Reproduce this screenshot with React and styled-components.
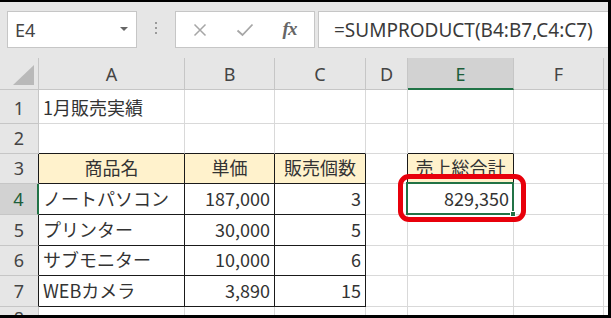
import React from 'react';
import styled, { createGlobalStyle } from 'styled-components';

const Global = createGlobalStyle`
  html, body { margin: 0; padding: 0; background: #fff; }
  body { font-family: "Noto Sans", "Noto Sans CJK JP", sans-serif; }
  * { box-sizing: border-box; }
`;

const GRID = '#d9d9d9';
const HDR_LINE = '#c6c6c6';
const BLACK = '#1a1a1a';
const GREEN = '#217346';

const Frame = styled.div`
  width: 611px;
  height: 318px;
  border-top: 2px solid #000;
  border-right: 3px solid #000;
  border-bottom: 3px solid #000;
  background: #e6e6e6;
  overflow: hidden;
  display: flex;
  flex-direction: column;
`;

const Toolbar = styled.div`
  height: 56px;
  flex-shrink: 0;
  padding: 9px 0 10px 7px;
  display: flex;
  align-items: stretch;
`;

const NameBox = styled.div`
  width: 130px;
  background: #fff;
  border: 1px solid ${HDR_LINE};
  display: flex;
  align-items: center;
  justify-content: space-between;
  padding: 0 8px 0 7px;
  font-family: "Noto Sans", sans-serif;
  font-size: 18px;
  color: #444;
`;

const Caret = styled.span`
  width: 0;
  height: 0;
  border-left: 4px solid transparent;
  border-right: 4px solid transparent;
  border-top: 4px solid #666;
  margin-bottom: 2px;
`;

const Grip = styled.div`
  width: 38px;
  display: flex;
  flex-direction: column;
  align-items: center;
  justify-content: center;
  gap: 3px;
  padding-bottom: 4px;
`;

const GripDot = styled.span`
  width: 2px;
  height: 2px;
  background: #9a9a9a;
`;

const FxButtons = styled.div`
  width: 140px;
  background: #fff;
  border: 1px solid ${HDR_LINE};
  display: flex;
  align-items: center;
  padding-left: 1px;
`;

const FxSlot = styled.div`
  width: 45px;
  height: 100%;
  display: flex;
  align-items: center;
  justify-content: center;
`;

const FxLabel = styled.span`
  font-family: "Liberation Serif", serif;
  font-style: italic;
  font-weight: bold;
  font-size: 19px;
  color: #666;
  letter-spacing: -1px;
  margin-top: -2px;
`;

const FormulaInput = styled.div`
  flex: 1;
  margin-left: 3px;
  background: #fff;
  border: 1px solid ${HDR_LINE};
  border-right: none;
  display: flex;
  align-items: center;
  padding-left: 15px;
  font-family: "Noto Sans", sans-serif;
  font-size: 19px;
  color: #3a3a3a;
  white-space: nowrap;
`;

const Sheet = styled.div`
  flex: 1;
  display: grid;
  grid-template-columns: 39px 146px 90px 91px 42px 106px 90px 1fr;
  grid-template-rows: 32px 34px 30px 30px 31px 31px 30px 31px 1fr;
  background: #fff;
`;

const Corner = styled.div`
  background: #e6e6e6;
  border-right: 1px solid ${HDR_LINE};
  border-bottom: 1px solid ${HDR_LINE};
  display: flex;
  align-items: flex-end;
  justify-content: flex-end;
  padding: 0 4px 4px 0;
`;

const ColHeader = styled.div`
  background: ${(p) => (p.$active ? '#d2d2d2' : '#e6e6e6')};
  border-right: ${(p) => (p.$last ? 'none' : `1px solid ${HDR_LINE}`)};
  border-bottom: ${(p) => (p.$active ? `2px solid ${GREEN}` : `1px solid ${HDR_LINE}`)};
  display: flex;
  align-items: center;
  justify-content: center;
  padding-top: ${(p) => (p.$active ? '1px' : '0')};
  font-family: "Noto Sans", sans-serif;
  font-size: 18px;
  color: ${(p) => (p.$active ? '#1d5e3a' : '#444')};
`;

const RowHeader = styled.div`
  background: ${(p) => (p.$active ? '#d2d2d2' : '#e6e6e6')};
  border-right: ${(p) => (p.$active ? `2px solid ${GREEN}` : `1px solid ${p.$edge}`)};
  border-bottom: 1px solid ${HDR_LINE};
  display: flex;
  align-items: flex-end;
  justify-content: center;
  padding-bottom: 4px;
  line-height: 22px;
  font-family: "Noto Sans", sans-serif;
  font-size: 18px;
  color: ${(p) => (p.$active ? '#1d5e3a' : '#444')};
`;

const Cell = styled.div`
  position: relative;
  background: ${(p) => p.$fill || '#fff'};
  border-right: ${(p) => (p.$r ? `1px solid ${p.$r}` : 'none')};
  border-bottom: ${(p) => (p.$b ? `1px solid ${p.$b}` : 'none')};
  display: flex;
  align-items: flex-end;
  justify-content: ${(p) =>
    p.$align === 'right' ? 'flex-end' : p.$align === 'center' ? 'center' : 'flex-start'};
  padding: 0 4px 5px 4px;
  line-height: 22px;
  font-family: "Noto Sans CJK JP", "Noto Sans", sans-serif;
  font-size: 18px;
  color: #333;
  white-space: nowrap;
`;

const Selection = styled.div`
  position: absolute;
  top: -2px;
  left: -2px;
  right: -1px;
  bottom: -1px;
  border: 2px solid ${GREEN};
  pointer-events: none;
  z-index: 2;
`;

const Handle = styled.span`
  position: absolute;
  right: -4px;
  bottom: -4px;
  width: 6px;
  height: 6px;
  background: ${GREEN};
  border: 1px solid #fff;
`;

const Callout = styled.div`
  position: absolute;
  top: -10px;
  left: -10px;
  right: -13px;
  bottom: -8px;
  border: 5px solid #e8000b;
  border-radius: 11px;
  pointer-events: none;
  z-index: 3;
`;

const COLS = ['A', 'B', 'C', 'D', 'E', 'F', ''];

const ROWS = [
  ['1月販売実績', '', '', '', '', '', ''],
  ['', '', '', '', '', '', ''],
  ['商品名', '単価', '販売個数', '', '売上総合計', '', ''],
  ['ノートパソコン', '187,000', '3', '', '829,350', '', ''],
  ['プリンター', '30,000', '5', '', '', '', ''],
  ['サブモニター', '10,000', '6', '', '', '', ''],
  ['WEBカメラ', '3,890', '15', '', '', '', ''],
  ['', '', '', '', '', '', ''],
];

const inTable = (r, c) =>
  (r >= 3 && r <= 7 && c >= 0 && c <= 2) || ((r === 3 || r === 4) && c === 4);

const isHeaderFill = (r, c) => r === 3 && (c <= 2 || c === 4);

const alignFor = (r, c, v) => {
  if (r === 3) return 'center';
  if (/^[\d,]+$/.test(v)) return 'right';
  return 'left';
};

const CloseIcon = () => (
  <svg width="14" height="14" viewBox="0 0 14 14">
    <path d="M1.5 1.5 L12.5 12.5 M12.5 1.5 L1.5 12.5" stroke="#a6a6a6" strokeWidth="1.5" fill="none" />
  </svg>
);

const CheckIcon = () => (
  <svg width="18" height="14" viewBox="0 0 18 14">
    <path d="M1.5 7.5 L6.5 12 L16.5 1.5" stroke="#a6a6a6" strokeWidth="1.8" fill="none" />
  </svg>
);

const SelectAll = () => (
  <svg width="21" height="20" viewBox="0 0 21 20">
    <polygon points="21,0 21,20 0,20" fill="#b9b9b9" />
  </svg>
);

export default function App() {
  return (
    <>
      <Global />
      <Frame>
        <Toolbar>
          <NameBox>
            E4
            <Caret />
          </NameBox>
          <Grip>
            <GripDot />
            <GripDot />
            <GripDot />
          </Grip>
          <FxButtons>
            <FxSlot>
              <CloseIcon />
            </FxSlot>
            <FxSlot>
              <CheckIcon />
            </FxSlot>
            <FxSlot>
              <FxLabel>fx</FxLabel>
            </FxSlot>
          </FxButtons>
          <FormulaInput>=SUMPRODUCT(B4:B7,C4:C7)</FormulaInput>
        </Toolbar>
        <Sheet>
          <Corner>
            <SelectAll />
          </Corner>
          {COLS.map((c, i) => (
            <ColHeader key={i} $active={c === 'E'} $last={i === COLS.length - 1}>
              {c}
            </ColHeader>
          ))}
          {ROWS.map((cells, ri) => {
            const r = ri + 1;
            const last = r === ROWS.length;
            return (
              <React.Fragment key={r}>
                <RowHeader $active={r === 4} $edge={inTable(r, 0) ? BLACK : HDR_LINE}>
                  {r}
                </RowHeader>
                {cells.map((v, c) => {
                  const rc = c === cells.length - 1 ? null : inTable(r, c) || inTable(r, c + 1) ? BLACK : GRID;
                  const bc = last ? null : inTable(r, c) || inTable(r + 1, c) ? BLACK : GRID;
                  const selected = r === 4 && c === 4;
                  return (
                    <Cell
                      key={c}
                      $r={rc}
                      $b={bc}
                      $fill={isHeaderFill(r, c) ? '#fff2cc' : undefined}
                      $align={alignFor(r, c, v)}
                    >
                      {v}
                      {selected && (
                        <>
                          <Selection>
                            <Handle />
                          </Selection>
                          <Callout />
                        </>
                      )}
                    </Cell>
                  );
                })}
              </React.Fragment>
            );
          })}
        </Sheet>
      </Frame>
    </>
  );
}
